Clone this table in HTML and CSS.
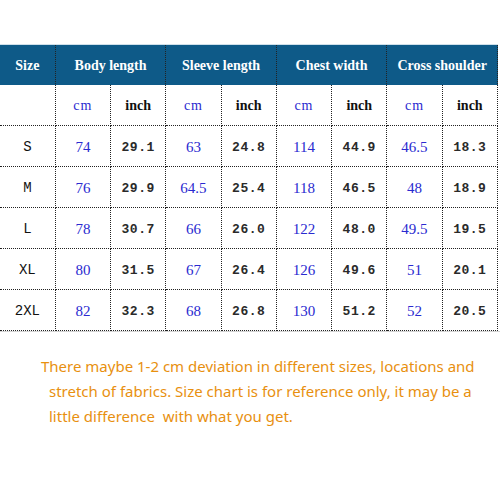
FILE: index.html
```html
<!DOCTYPE html>
<html>
<head>
<meta charset="utf-8">
<link rel="stylesheet" href="styles.css">
</head>
<body>
<div class="page">
  <table class="chart">
    <colgroup>
      <col class="col"><col class="col"><col class="col"><col class="col"><col class="col">
      <col class="col"><col class="col"><col class="col"><col class="col">
    </colgroup>
    <tr class="head">
      <th class="c-size">Size</th>
      <th colspan="2">Body length</th>
      <th colspan="2">Sleeve length</th>
      <th colspan="2">Chest width</th>
      <th colspan="2">Cross shoulder</th>
    </tr>
    <tr class="units">
      <td></td>
      <td class="cm">cm</td><td class="in">inch</td>
      <td class="cm">cm</td><td class="in">inch</td>
      <td class="cm">cm</td><td class="in">inch</td>
      <td class="cm">cm</td><td class="in">inch</td>
    </tr>
    <tr>
      <td class="sz">S</td>
      <td class="cm">74</td><td class="in">29.1</td>
      <td class="cm">63</td><td class="in">24.8</td>
      <td class="cm">114</td><td class="in">44.9</td>
      <td class="cm">46.5</td><td class="in">18.3</td>
    </tr>
    <tr>
      <td class="sz">M</td>
      <td class="cm">76</td><td class="in">29.9</td>
      <td class="cm">64.5</td><td class="in">25.4</td>
      <td class="cm">118</td><td class="in">46.5</td>
      <td class="cm">48</td><td class="in">18.9</td>
    </tr>
    <tr>
      <td class="sz">L</td>
      <td class="cm">78</td><td class="in">30.7</td>
      <td class="cm">66</td><td class="in">26.0</td>
      <td class="cm">122</td><td class="in">48.0</td>
      <td class="cm">49.5</td><td class="in">19.5</td>
    </tr>
    <tr>
      <td class="sz">XL</td>
      <td class="cm">80</td><td class="in">31.5</td>
      <td class="cm">67</td><td class="in">26.4</td>
      <td class="cm">126</td><td class="in">49.6</td>
      <td class="cm">51</td><td class="in">20.1</td>
    </tr>
    <tr>
      <td class="sz">2XL</td>
      <td class="cm">82</td><td class="in">32.3</td>
      <td class="cm">68</td><td class="in">26.8</td>
      <td class="cm">130</td><td class="in">51.2</td>
      <td class="cm">52</td><td class="in">20.5</td>
    </tr>
  </table>
  <div class="rule"></div>
  <p class="note">There maybe 1-2 cm deviation in different sizes, locations and stretch of fabrics. Size chart is for reference only, it may be a little difference&nbsp; with what you get.</p>
</div>
</body>
</html>
```

FILE: styles.css
```css
html, body {
  margin: 0;
  padding: 0;
  background: #ffffff;
}

.page {
  width: 500px;
  height: 500px;
  padding-top: 44px;
  box-sizing: border-box;
}

.chart {
  width: 498px;
  border-collapse: collapse;
  table-layout: fixed;
  border-top: 1px solid #cfe0ea;
}

.col {
  width: 11.111%;
}

.chart th,
.chart td {
  text-align: center;
  vertical-align: middle;
  padding: 2px 0 0 0;
  border: 1px dotted #222;
  overflow: visible;
  white-space: nowrap;
}

.chart tr:first-child th {
  border-top: none;
}

.chart tr > *:first-child {
  border-left: none;
}

.head th {
  height: 37px;
  padding-top: 2px;
  background: #0e5a88;
  color: #ffffff;
  font-family: "Liberation Serif", serif;
  font-weight: bold;
  font-size: 14px;
  border-bottom: 1px solid #0e5a88;
}

.chart td {
  height: 38px;
}

.units td {
  font-family: "Liberation Serif", serif;
  font-size: 14px;
}

.units .cm {
  color: #2a2ad0;
  letter-spacing: 1px;
}

.units .in {
  font-weight: bold;
  color: #111;
}

.sz {
  font-family: "Liberation Mono", monospace;
  font-size: 14px;
  color: #111;
}

tr:not(.units) .cm {
  font-family: "Liberation Serif", serif;
  font-size: 15px;
  color: #2a2ad0;
}

tr:not(.units) .in {
  font-family: "Liberation Mono", monospace;
  font-size: 13px;
  font-weight: bold;
  color: #2a2a2a;
  letter-spacing: 0.5px;
}

.rule {
  width: 500px;
  height: 1px;
  background: #d4d4d4;
}

.note {
  margin: 22px 25px 0 49px;
  text-indent: -8px;
  font-family: "Noto Sans", sans-serif;
  font-size: 15px;
  line-height: 25px;
  color: #e8900f;
}
```
